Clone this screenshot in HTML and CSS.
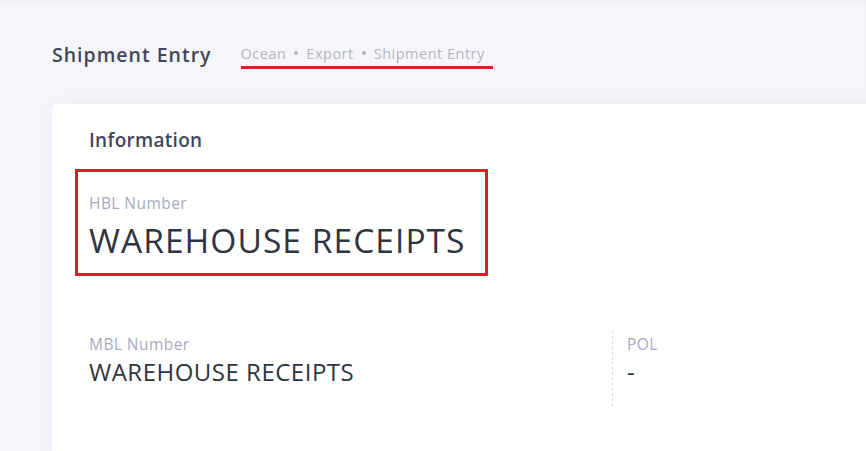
FILE: index.html
```html
<!DOCTYPE html>
<html>
  <head>
    <title>Shipment Entry</title>
    <link rel="stylesheet" href="styles.css">
  </head>

  <body>
    <div class="page">
      <!-- Toolbar -->
      <div class="toolbar">
        <h1 class="page-title">Shipment Entry</h1>
        <div class="breadcrumb">
          <span>Ocean</span>
          <span class="dot"></span>
          <span>Export</span>
          <span class="dot"></span>
          <span>Shipment Entry</span>
        </div>
      </div>

      <!-- Information card -->
      <div class="card">
        <h3 class="card-title">Information</h3>

        <div class="field field-hbl">
          <div class="field-label">HBL Number</div>
          <div class="field-value-lg">WAREHOUSE RECEIPTS</div>
        </div>

        <div class="field-row">
          <div class="field-col col-mbl">
            <div class="field-label">MBL Number</div>
            <div class="field-value">WAREHOUSE RECEIPTS</div>
          </div>
          <div class="field-col col-pol">
            <div class="field-label">POL</div>
            <div class="field-value">-</div>
          </div>
        </div>
      </div>
    </div>
  </body>
</html>
```

FILE: styles.css
```css
* {
  margin: 0;
  padding: 0;
  box-sizing: border-box;
  font-family: 'Open Sans', 'Liberation Sans', sans-serif;
}

html, body {
  overflow: hidden;
}

body {
  background: #f5f6fa;
  box-shadow: inset 0 3px 4px -2px rgba(60, 70, 110, 0.06);
  height: 451px;
}

.page {
  padding: 34px 0 0 52px;
}

.toolbar {
  display: flex;
  align-items: center;
  gap: 29px;
  height: 40px;
}

.page-title {
  font-size: 19.5px;
  font-weight: 600;
  color: #43465a;
  letter-spacing: 1px;
}

.breadcrumb {
  display: flex;
  align-items: center;
  gap: 8px;
  font-size: 14.5px;
  color: #b5b5c3;
  letter-spacing: 0.5px;
  padding-bottom: 3px;
  border-bottom: 3px solid #dc1f24;
  padding-right: 8px;
  margin-top: 4px;
}

.breadcrumb .dot {
  width: 4px;
  height: 4px;
  border-radius: 50%;
  background: #b5b5c3;
}

.card {
  margin-top: 30px;
  margin-right: -40px;
  background: #fff;
  border-radius: 6px;
  box-shadow: 0 0 20px 0 rgba(76, 87, 125, 0.05);
  padding: 23px 37px 0;
  height: 360px;
}

.card-title {
  font-size: 19px;
  font-weight: 600;
  color: #43465a;
  line-height: 26px;
  letter-spacing: 0.3px;
}

.field-hbl {
  width: 413px;
  margin: 16px 0 0 -14px;
  border: 3px solid #dc1f24;
  padding: 21px 11px 11px;
}

.field-label {
  font-size: 15.5px;
  color: #a6abc0;
  line-height: 20px;
  letter-spacing: 0.45px;
}

.field-value-lg {
  font-size: 33.5px;
  color: #2f3441;
  line-height: 44px;
  margin-top: 5px;
  letter-spacing: 1.05px;
}

.field-row {
  display: flex;
  margin-top: 55px;
}

.field-col {
  padding: 3px 0 18px;
}

.col-mbl {
  width: 524px;
  border-right: 1px dashed #dcdde5;
}

.col-pol {
  padding-left: 14px;
}

.field-value {
  font-size: 24px;
  color: #2f3441;
  line-height: 32px;
  margin-top: 2px;
  letter-spacing: 0.5px;
}
```
